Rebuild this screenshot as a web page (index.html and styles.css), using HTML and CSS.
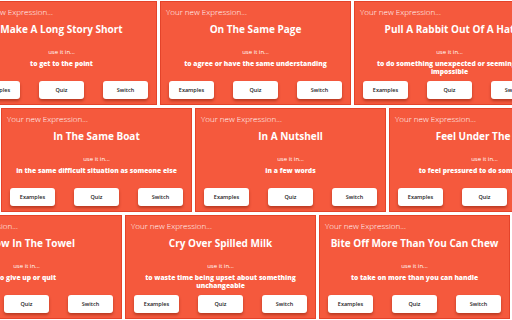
FILE: index.html
```html
<!DOCTYPE html>
<html>
<head>
<meta charset="utf-8">
<link rel="stylesheet" href="styles.css">
</head>
<body>
<div class="wall">
  <div class="row row-1">
    <div class="card">
      <div class="label">Your new Expression...</div>
      <div class="title">Make A Long Story Short</div>
      <div class="use">use it in...</div>
      <div class="meaning">to get to the point</div>
      <div class="actions"><div class="btn">Examples</div><div class="btn">Quiz</div><div class="btn">Switch</div></div>
    </div>
    <div class="card">
      <div class="label">Your new Expression...</div>
      <div class="title">On The Same Page</div>
      <div class="use">use it in...</div>
      <div class="meaning">to agree or have the same understanding</div>
      <div class="actions"><div class="btn">Examples</div><div class="btn">Quiz</div><div class="btn">Switch</div></div>
    </div>
    <div class="card">
      <div class="label">Your new Expression...</div>
      <div class="title">Pull A Rabbit Out Of A Hat</div>
      <div class="use">use it in...</div>
      <div class="meaning">to do something unexpected or seemingly impossible</div>
      <div class="actions"><div class="btn">Examples</div><div class="btn">Quiz</div><div class="btn">Switch</div></div>
    </div>
  </div>
  <div class="row row-2">
    <div class="card">
      <div class="label">Your new Expression...</div>
      <div class="title">In The Same Boat</div>
      <div class="use">use it in...</div>
      <div class="meaning">in the same difficult situation as someone else</div>
      <div class="actions"><div class="btn">Examples</div><div class="btn">Quiz</div><div class="btn">Switch</div></div>
    </div>
    <div class="card">
      <div class="label">Your new Expression...</div>
      <div class="title">In A Nutshell</div>
      <div class="use">use it in...</div>
      <div class="meaning">in a few words</div>
      <div class="actions"><div class="btn">Examples</div><div class="btn">Quiz</div><div class="btn">Switch</div></div>
    </div>
    <div class="card">
      <div class="label">Your new Expression...</div>
      <div class="title">Feel Under The Gun</div>
      <div class="use">use it in...</div>
      <div class="meaning">to feel pressured to do something fast</div>
      <div class="actions"><div class="btn">Examples</div><div class="btn">Quiz</div><div class="btn">Switch</div></div>
    </div>
  </div>
  <div class="row row-3">
    <div class="card">
      <div class="label">Your new Expression...</div>
      <div class="title">Throw In The Towel</div>
      <div class="use">use it in...</div>
      <div class="meaning">to give up or quit</div>
      <div class="actions"><div class="btn">Examples</div><div class="btn">Quiz</div><div class="btn">Switch</div></div>
    </div>
    <div class="card">
      <div class="label">Your new Expression...</div>
      <div class="title">Cry Over Spilled Milk</div>
      <div class="use">use it in...</div>
      <div class="meaning">to waste time being upset about something unchangeable</div>
      <div class="actions"><div class="btn">Examples</div><div class="btn">Quiz</div><div class="btn">Switch</div></div>
    </div>
    <div class="card">
      <div class="label">Your new Expression...</div>
      <div class="title">Bite Off More Than You Can Chew</div>
      <div class="use">use it in...</div>
      <div class="meaning">to take on more than you can handle</div>
      <div class="actions"><div class="btn">Examples</div><div class="btn">Quiz</div><div class="btn">Switch</div></div>
    </div>
  </div>
</div>
</body>
</html>
```
FILE: styles.css
```css
html, body {
  margin: 0;
  padding: 0;
}
body {
  width: 512px;
  height: 320px;
  overflow: hidden;
  background: #ffffff;
  font-family: "Open Sans", "Liberation Sans", sans-serif;
}
.wall {
  display: flex;
  flex-direction: column;
  gap: 3px;
  padding-top: 1px;
}
.row {
  display: flex;
  gap: 3px;
}
.row-1 { margin-left: -34px; }
.row-2 { margin-left: 1px; }
.row-3 { margin-left: -69px; }
.card {
  flex: none;
  width: 191px;
  height: 104px;
  box-sizing: border-box;
  background: #f5593d;
  border: 1px solid #e4432a;
  color: #ffffff;
  display: flex;
  flex-direction: column;
  padding: 5px 5px 0;
}
.label {
  font-weight: 300;
  font-size: 8px;
  line-height: 10px;
  white-space: nowrap;
}
.title {
  margin-top: 5px;
  font-weight: 700;
  font-size: 10px;
  line-height: 14px;
  text-align: center;
  white-space: nowrap;
}
.use {
  margin-top: 12px;
  font-size: 6px;
  line-height: 8px;
  text-align: center;
}
.meaning {
  margin-top: 4px;
  height: 16px;
  padding: 0 5px;
  font-weight: 800;
  font-size: 6.7px;
  line-height: 8px;
  text-align: center;
}
.actions {
  margin-top: 5px;
  padding: 0 3px;
  display: flex;
  justify-content: space-between;
}
.btn {
  width: 45px;
  height: 18px;
  background: #ffffff;
  border-radius: 3px;
  box-shadow: 0 2px 3px rgba(110, 20, 0, 0.45);
  color: #222222;
  font-size: 5.5px;
  font-weight: 600;
  display: flex;
  align-items: center;
  justify-content: center;
}
```
